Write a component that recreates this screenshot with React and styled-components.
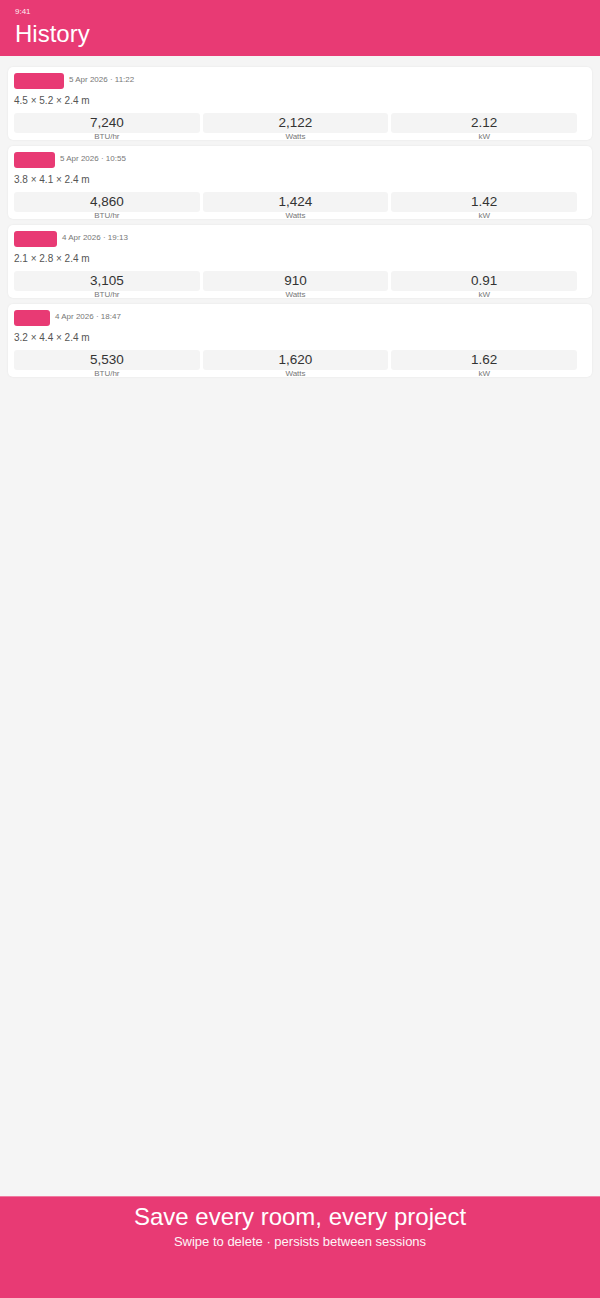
import React from "react";
import styled, { createGlobalStyle } from "styled-components";

const GlobalStyle = createGlobalStyle`
    html, body {
        margin: 0;
        padding: 0;
        background: #f5f5f5;
        font-family: "Liberation Sans", Arial, sans-serif;
    }
`;

const PINK = "#e83a74";

const entries = [
    { tag: 50, date: "5 Apr 2026 · 11:22", dims: "4.5 × 5.2 × 2.4 m", btu: "7,240", watts: "2,122", kw: "2.12" },
    { tag: 41, date: "5 Apr 2026 · 10:55", dims: "3.8 × 4.1 × 2.4 m", btu: "4,860", watts: "1,424", kw: "1.42" },
    { tag: 43, date: "4 Apr 2026 · 19:13", dims: "2.1 × 2.8 × 2.4 m", btu: "3,105", watts: "910", kw: "0.91" },
    { tag: 36, date: "4 Apr 2026 · 18:47", dims: "3.2 × 4.4 × 2.4 m", btu: "5,530", watts: "1,620", kw: "1.62" },
];

const App = () => {
    return (
        <Screen>
            <GlobalStyle />
            <Header>
                <StatusTime>9:41</StatusTime>
                <Title>History</Title>
            </Header>

            <List>
                {entries.map((e, i) => (
                    <Card key={i}>
                        <CardTop>
                            <Tag $w={e.tag} />
                            <DateText>{e.date}</DateText>
                        </CardTop>
                        <Dims>{e.dims}</Dims>
                        <Stats>
                            <Stat>
                                <StatValue>{e.btu}</StatValue>
                                <StatLabel>BTU/hr</StatLabel>
                            </Stat>
                            <Stat>
                                <StatValue>{e.watts}</StatValue>
                                <StatLabel>Watts</StatLabel>
                            </Stat>
                            <Stat>
                                <StatValue>{e.kw}</StatValue>
                                <StatLabel>kW</StatLabel>
                            </Stat>
                        </Stats>
                    </Card>
                ))}
            </List>

            <Footer>
                <FooterTitle>Save every room, every project</FooterTitle>
                <FooterSub>Swipe to delete · persists between sessions</FooterSub>
            </Footer>
        </Screen>
    );
};

const Screen = styled.div`
    width: 600px;
    height: 1298px;
    display: flex;
    flex-direction: column;
    background: #f5f5f5;
    overflow: hidden;
`;

const Header = styled.div`
    background: ${PINK};
    height: 56px;
    box-sizing: border-box;
    padding: 7px 15px 0;
    color: #fff;
`;

const StatusTime = styled.div`
    font-size: 8px;
    line-height: 10px;
    opacity: 0.9;
`;

const Title = styled.h1`
    margin: 2px 0 0;
    font-size: 24px;
    font-weight: 400;
    line-height: 30px;
`;

const List = styled.div`
    flex: 1;
    display: flex;
    flex-direction: column;
    gap: 6px;
    padding: 11px 8px 0;
`;

const Card = styled.div`
    background: #fff;
    border-radius: 5px;
    box-shadow: 0 0 2px rgba(0, 0, 0, 0.08);
    height: 73px;
    box-sizing: border-box;
    padding: 6px 15px 0 6px;
`;

const CardTop = styled.div`
    display: flex;
    align-items: center;
    gap: 5px;
`;

const Tag = styled.div`
    width: ${p => p.$w}px;
    height: 16px;
    border-radius: 3px;
    background: ${PINK};
`;

const DateText = styled.span`
    font-size: 8px;
    color: #777;
    margin-top: -3px;
`;

const Dims = styled.div`
    font-size: 10px;
    color: #555;
    margin-top: 6px;
    line-height: 12px;
`;

const Stats = styled.div`
    display: grid;
    grid-template-columns: repeat(3, 1fr);
    gap: 3px;
    margin-top: 6px;
`;

const Stat = styled.div`
    display: flex;
    flex-direction: column;
    align-items: center;
`;

const StatValue = styled.div`
    width: 100%;
    height: 20px;
    background: #f4f4f4;
    border-radius: 3px;
    text-align: center;
    font-size: 13.5px;
    line-height: 19px;
    color: #333;
`;

const StatLabel = styled.div`
    font-size: 8px;
    line-height: 8px;
    color: #777;
`;

const Footer = styled.div`
    background: ${PINK};
    border-top: 1px solid #f07aa0;
    height: 102px;
    box-sizing: border-box;
    text-align: center;
    color: #fff;
    padding-top: 5px;
`;

const FooterTitle = styled.div`
    font-size: 24px;
    line-height: 30px;
`;

const FooterSub = styled.div`
    font-size: 13px;
    line-height: 16px;
    margin-top: 2px;
    opacity: 0.95;
`;

export default App;
